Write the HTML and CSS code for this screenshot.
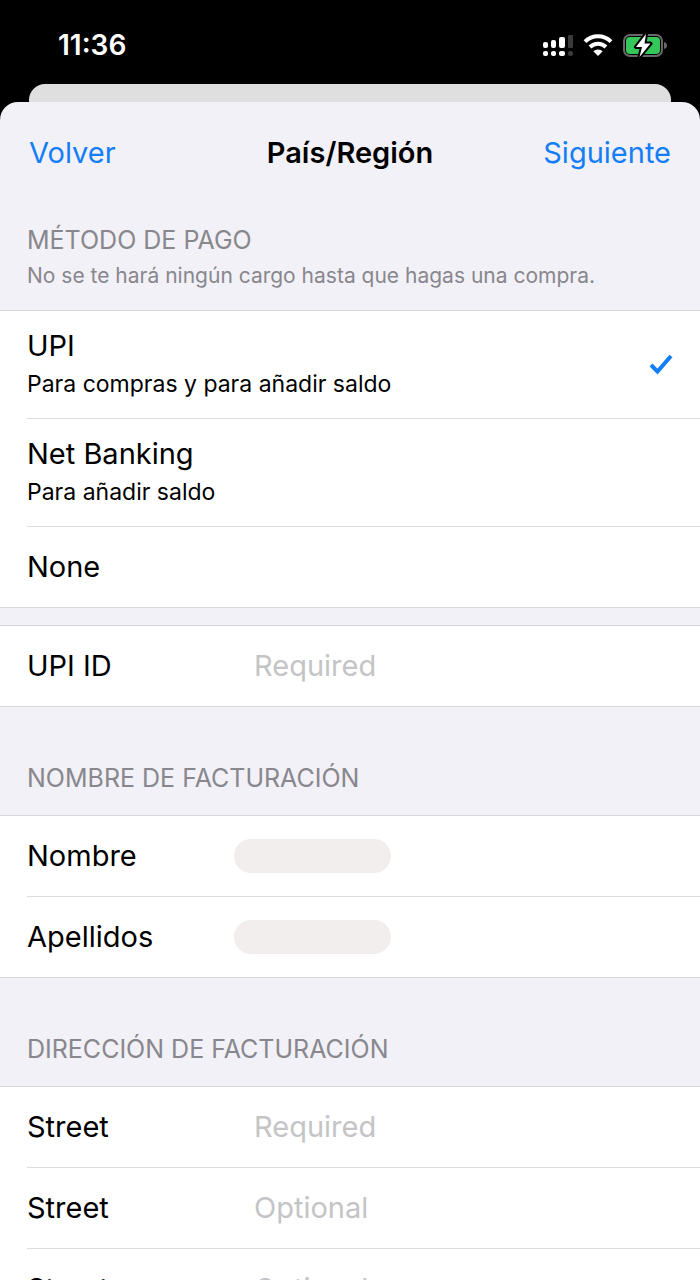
FILE: index.html
```html
<!DOCTYPE html>
<html lang="es">
<head>
    <meta charset="UTF-8">
    <meta name="viewport" content="width=device-width, initial-scale=1.0">
    <title>País/Región</title>
    <link rel="stylesheet" href="styles.css">
</head>
<body>
    <div class="status-bar">
        <time class="clock">11:36</time>
        <div class="status-icons">
            <svg class="icon-signal" width="32" height="24" viewBox="0 0 32 24">
                <g fill="#fff">
                    <rect x="1" y="9" width="5" height="6" rx="2"/>
                    <rect x="9" y="7" width="5" height="8" rx="2"/>
                    <rect x="17" y="4" width="6" height="11" rx="2"/>
                    <rect x="1" y="18" width="5" height="5" rx="2"/>
                    <rect x="9" y="18" width="5" height="5" rx="2"/>
                    <rect x="17" y="18" width="6" height="5" rx="2"/>
                </g>
                <g fill="#3a3a3a">
                    <rect x="26" y="2" width="5" height="13" rx="1"/>
                    <rect x="26" y="18" width="5" height="5" rx="2"/>
                </g>
            </svg>
            <svg class="icon-wifi" width="30" height="24" viewBox="0 0 30 24">
                <g fill="none" stroke="#fff" stroke-width="4">
                    <path d="M2 8.600 A18.500 18.500 0 0 1 28 8.600"/>
                    <path d="M7 14 A11.500 11.500 0 0 1 23 14"/>
                </g>
                <path fill="#fff" d="M10.300 18.200 A7 7 0 0 1 19.700 18.200 L15 23 Z"/>
            </svg>
            <svg class="icon-battery" width="46" height="26" viewBox="0 0 46 26">
                <rect x="2" y="3" width="38" height="21" rx="6" fill="none" stroke="#686868" stroke-width="2"/>
                <path fill="#686868" d="M42 10 Q45 11 45 13.500 Q45 16 42 17 Z"/>
                <rect x="4" y="5" width="34" height="17" rx="4" fill="#34c759"/>
                <path fill="#fff" stroke="#000" stroke-width="4" stroke-linejoin="round" paint-order="stroke" d="M24 2 L14 15 H20 L17.500 25 L28.500 11.500 H22.500 Z"/>
            </svg>
        </div>
    </div>

    <div class="back-sheet"></div>

    <form class="sheet">
        <header class="nav">
            <button type="button" class="nav-button">Volver</button>
            <h1>País/Región</h1>
            <button type="submit" class="nav-button nav-next">Siguiente</button>
        </header>

        <div class="section-header section-header-first">
            <h2>MÉTODO DE PAGO</h2>
            <p>No se te hará ningún cargo hasta que hagas una compra.</p>
        </div>
        <div class="group">
            <label class="option">
                <span class="option-text">
                    <span class="option-title">UPI</span>
                    <span class="option-note">Para compras y para añadir saldo</span>
                </span>
                <input type="radio" name="payment" value="upi" checked>
                <svg class="check" width="26" height="24" viewBox="0 0 26 24">
                    <path d="M3 12 L9.500 18.500 L23 3"/>
                </svg>
            </label>
            <label class="option">
                <span class="option-text">
                    <span class="option-title">Net Banking</span>
                    <span class="option-note">Para añadir saldo</span>
                </span>
                <input type="radio" name="payment" value="netbanking">
                <svg class="check" width="26" height="24" viewBox="0 0 26 24">
                    <path d="M3 12 L9.500 18.500 L23 3"/>
                </svg>
            </label>
            <label class="option option-short">
                <span class="option-text">
                    <span class="option-title">None</span>
                </span>
                <input type="radio" name="payment" value="none">
                <svg class="check" width="26" height="24" viewBox="0 0 26 24">
                    <path d="M3 12 L9.500 18.500 L23 3"/>
                </svg>
            </label>
        </div>

        <div class="group group-spaced">
            <div class="field">
                <label for="upiId">UPI ID</label>
                <input type="text" id="upiId" placeholder="Required">
            </div>
        </div>

        <div class="section-header">
            <h2>NOMBRE DE FACTURACIÓN</h2>
        </div>
        <div class="group">
            <div class="field">
                <label for="firstName">Nombre</label>
                <input type="text" id="firstName" class="redacted" readonly>
            </div>
            <div class="field">
                <label for="lastName">Apellidos</label>
                <input type="text" id="lastName" class="redacted" readonly>
            </div>
        </div>

        <div class="section-header">
            <h2>DIRECCIÓN DE FACTURACIÓN</h2>
        </div>
        <div class="group">
            <div class="field">
                <label for="street1">Street</label>
                <input type="text" id="street1" placeholder="Required">
            </div>
            <div class="field">
                <label for="street2">Street</label>
                <input type="text" id="street2" placeholder="Optional">
            </div>
            <div class="field">
                <label for="street3">Street</label>
                <input type="text" id="street3" placeholder="Optional">
            </div>
        </div>
    </form>
</body>
</html>
```
FILE: styles.css
```css
* {
    box-sizing: border-box;
}
body {
    display: flex;
    flex-direction: column;
    height: 100vh;
    margin: 0;
    overflow: hidden;
    background-color: #000;
    color: #000;
    font-family: Inter, "Liberation Sans", sans-serif;
    font-size: 29px;
    line-height: 36px;
}
h1, h2, p {
    margin: 0;
}
button, input {
    font: inherit;
}

/* Status bar */
.status-bar {
    display: flex;
    flex-shrink: 0;
    align-items: center;
    justify-content: space-between;
    height: 84px;
    padding: 5px 32px 0 58px;
    color: #fff;
}
.clock {
    font-size: 28px;
    font-weight: 600;
}
.status-icons {
    display: flex;
    align-items: center;
    gap: 9px;
}

/* Sheets */
.back-sheet {
    flex-shrink: 0;
    height: 36px;
    margin: 0 29px -18px;
    border-radius: 16px 16px 0 0;
    background-color: #dfdfdf;
}
.sheet {
    position: relative;
    flex: 1;
    min-height: 0;
    overflow-y: auto;
    scrollbar-width: none;
    border-radius: 18px 18px 0 0;
    background-color: #f2f1f7;
}
.nav {
    display: grid;
    grid-template-columns: 1fr auto 1fr;
    align-items: center;
    height: 102px;
    padding: 0 29px;
}
.nav h1 {
    font-size: 29px;
    font-weight: 600;
}
.nav-button {
    justify-self: start;
    padding: 0;
    border: none;
    background: none;
    color: #147ef6;
    cursor: pointer;
}
.nav-next {
    justify-self: end;
}

/* Section headers */
.section-header {
    display: flex;
    flex-direction: column;
    justify-content: flex-end;
    height: 108px;
    padding: 0 27px 19px;
    color: #88878d;
}
.section-header-first {
    height: 106px;
    padding-bottom: 16px;
}
.section-header h2 {
    font-size: 25px;
    font-weight: 400;
}
.section-header p {
    font-size: 21px;
}

/* Rows */
.group {
    padding-left: 27px;
    border-top: 1px solid #d8d7dc;
    border-bottom: 1px solid #d8d7dc;
    background-color: #fff;
}
.group-spaced {
    margin-top: 17px;
}
.option, .field {
    display: flex;
    align-items: center;
    height: 80px;
}
.option {
    height: 107px;
    padding-right: 26px;
    cursor: pointer;
}
.option-short {
    height: 80px;
}
.option + .option, .field + .field {
    box-sizing: content-box;
    border-top: 1px solid #dcdcde;
}
.option-text {
    display: flex;
    flex: 1;
    flex-direction: column;
    gap: 2px;
}
.option-note {
    font-size: 23px;
}
.option input {
    appearance: none;
    width: 0;
    margin: 0;
}
.check {
    visibility: hidden;
    fill: none;
    stroke: #147ef6;
    stroke-width: 4;
}
.option input:checked + .check {
    visibility: visible;
}
.field label {
    width: 207px;
}
.field input {
    flex: 1;
    min-width: 0;
    padding: 0 20px;
    border: none;
    outline: none;
    background: none;
}
.field input::placeholder {
    color: #c4c4c6;
    opacity: 1;
}
.field .redacted {
    flex: none;
    width: 157px;
    height: 34px;
    border-radius: 17px;
    background-color: #f2eeee;
}
```
